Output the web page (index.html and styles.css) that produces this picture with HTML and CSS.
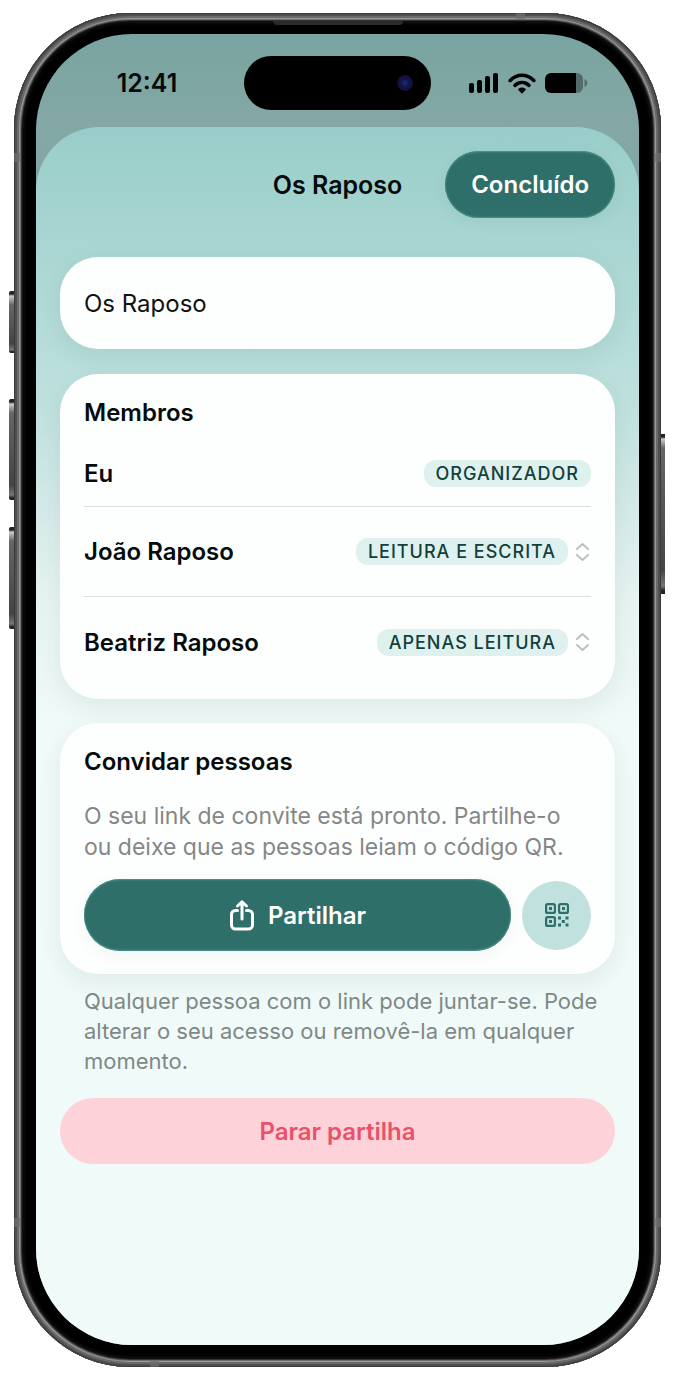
FILE: index.html
```
<!DOCTYPE html>
<html lang="pt">
<head>
    <meta charset="UTF-8">
    <meta name="viewport" content="width=device-width, initial-scale=1.0">
    <title>Os Raposo</title>
    <link rel="stylesheet" href="styles.css">
</head>
<body>

    <div class="phone">
        <!-- Hardware buttons -->
        <span class="side-button action"></span>
        <span class="side-button volume-up"></span>
        <span class="side-button volume-down"></span>
        <span class="side-button power"></span>
        <!-- Antenna bands and speaker slot -->
        <span class="band band-top"></span>
        <span class="band band-bottom"></span>
        <span class="band band-left"></span>
        <span class="band band-right"></span>
        <span class="band band-left low"></span>
        <span class="band band-right low"></span>
        <span class="speaker"></span>

        <div class="screen">
            <div class="status-bar">
                <span class="time">12:41</span>
                <div class="island"><span class="camera"></span></div>
                <div class="status-icons">
                    <svg width="30" height="20" viewBox="0 0 30 20" aria-hidden="true">
                        <rect x="0" y="10" width="5" height="10" rx="2"/>
                        <rect x="8" y="7" width="5" height="13" rx="2"/>
                        <rect x="16" y="3" width="5" height="17" rx="2"/>
                        <rect x="24" y="0" width="5" height="20" rx="2"/>
                    </svg>
                    <svg width="28" height="21" viewBox="0 0 28 21" aria-hidden="true">
                        <g fill="none" stroke="#000" stroke-width="3.6" stroke-linecap="round">
                            <path d="M2.200 7.400C9 .600 19 .600 25.800 7.400"/>
                            <path d="M7 12.300c4.200-3.800 9.800-3.800 14 0"/>
                        </g>
                        <path d="M14 20.800l-3.400-3.500c-.6-.7-.4-1.500.3-1.900 1.900-1.200 4.300-1.200 6.200 0 .7.400.9 1.200.3 1.900z"/>
                    </svg>
                    <svg width="43" height="20" viewBox="0 0 43 20" aria-hidden="true">
                        <path d="M31 0h1a6 6 0 0 1 6 6v8a6 6 0 0 1-6 6h-1z" opacity=".35"/>
                        <path d="M6 0h25v20H6a6 6 0 0 1-6-6V6a6 6 0 0 1 6-6z"/>
                        <path d="M39.500 6c3.800 1.600 3.800 6.400 0 8z" opacity=".35"/>
                    </svg>
                </div>
            </div>

            <main class="sheet">
                <header class="sheet-header">
                    <h1>Os Raposo</h1>
                    <button type="button" class="glass done">Concluído</button>
                </header>

                <input type="text" class="card name-input" value="Os Raposo" aria-label="Nome do grupo">

                <section class="card members">
                    <h2>Membros</h2>
                    <ul>
                        <li>
                            <span>Eu</span>
                            <span class="pill">Organizador</span>
                        </li>
                        <li>
                            <label for="joao">João Raposo</label>
                            <div class="access">
                                <select id="joao" class="pill">
                                    <option selected>Leitura e escrita</option>
                                    <option>Apenas leitura</option>
                                </select>
                                <svg width="16" height="20" viewBox="0 0 16 20" aria-hidden="true">
                                    <path d="M2 7L7.500 2 13 7M2 13l5.500 5 5.500-5"/>
                                </svg>
                            </div>
                        </li>
                        <li>
                            <label for="beatriz">Beatriz Raposo</label>
                            <div class="access">
                                <select id="beatriz" class="pill">
                                    <option>Leitura e escrita</option>
                                    <option selected>Apenas leitura</option>
                                </select>
                                <svg width="16" height="20" viewBox="0 0 16 20" aria-hidden="true">
                                    <path d="M2 7L7.500 2 13 7M2 13l5.500 5 5.500-5"/>
                                </svg>
                            </div>
                        </li>
                    </ul>
                </section>

                <section class="card invite">
                    <h2>Convidar pessoas</h2>
                    <p>O seu link de convite está pronto. Partilhe-o ou deixe que as pessoas leiam o código QR.</p>
                    <div class="invite-actions">
                        <button type="button" class="glass share">
                            <svg width="26" height="32" viewBox="0 0 26 32" aria-hidden="true">
                                <path d="M8.500 11.500H6.500a4 4 0 0 0-4 4V26a4 4 0 0 0 4 4h13a4 4 0 0 0 4-4V15.500a4 4 0 0 0-4-4h-2M13 20V3M8.500 7L13 2.800 17.500 7"/>
                            </svg>
                            Partilhar
                        </button>
                        <button type="button" class="qr" aria-label="Código QR">
                            <svg width="24" height="24" viewBox="0 0 24 24" aria-hidden="true">
                                <g fill="none" stroke="#2f6f6a" stroke-width="2.200">
                                    <rect x="1.100" y="1.100" width="8.800" height="8.800" rx="1.500"/>
                                    <rect x="14.100" y="1.100" width="8.800" height="8.800" rx="1.500"/>
                                    <rect x="1.100" y="14.100" width="8.800" height="8.800" rx="1.500"/>
                                </g>
                                <path fill="#2f6f6a" d="M4 4h3v3H4zM17 4h3v3h-3zM4 17h3v3H4zM13 13.500h3v3h-3zM20.500 13.500h3v3h-3zM16.800 17h3v3h-3zM13 20.500h3v3h-3zM20.500 20.500h3v3h-3z"/>
                            </svg>
                        </button>
                    </div>
                </section>

                <p class="note">Qualquer pessoa com o link pode juntar-se. Pode alterar o seu acesso ou removê-la em qualquer momento.</p>

                <button type="button" class="stop">Parar partilha</button>
            </main>
        </div>
    </div>

</body>
</html>
```
FILE: styles.css
```
* {
    box-sizing: border-box;
}

body {
    margin: 0;
    padding: 13px 14px;
    min-height: 100vh;
    display: flex;
    background-color: white;
    color: #050b0b;
    font-family: Inter, "Liberation Sans", sans-serif;
    font-size: 24px;
}

h1, h2, p, ul {
    margin: 0;
    padding: 0;
}

button, input, select {
    font-family: inherit;
    border: none;
}

button {
    cursor: pointer;
}

.phone {
    position: relative;
    flex: 1;
    display: flex;
    padding: 21px 22px 22px;
    border-radius: 116px;
    background-color: black;
    box-shadow:
        inset 0 0 0 1px #3a3a3a,
        inset 0 0 0 3px #505050,
        inset 0 0 0 5px #6a6a6a,
        inset 0 0 0 6px #999,
        inset 0 0 0 7px #6e6e6e,
        inset 0 0 0 8px #333,
        inset 0 0 4px 9px #1c1c1c;
}

.side-button {
    position: absolute;
    width: 5px;
    background: linear-gradient(#222 0, #222 3px, #ccc 5px, #666 14px, #444 85%, #777 95%, #222 98%);
}

.side-button.action {
    left: -5px;
    top: 278px;
    height: 62px;
    border-radius: 2px 0 0 2px;
}

.side-button.volume-up {
    left: -5px;
    top: 386px;
    height: 101px;
    border-radius: 2px 0 0 2px;
}

.side-button.volume-down {
    left: -5px;
    top: 514px;
    height: 102px;
    border-radius: 2px 0 0 2px;
}

.side-button.power {
    right: -4px;
    top: 421px;
    height: 160px;
    width: 4px;
}

.band {
    position: absolute;
    width: 7px;
    height: 9px;
    background-color: rgba(110, 110, 110, 0.7);
}

.band-top {
    top: 0;
    right: 136px;
    width: 9px;
    height: 7px;
}

.band-bottom {
    bottom: 0;
    left: 136px;
    width: 9px;
    height: 7px;
}

.band-left {
    left: 0;
    top: 140px;
}

.band-right {
    right: 0;
    top: 140px;
}

.band.low {
    top: auto;
    bottom: 140px;
}

.speaker {
    position: absolute;
    top: 8px;
    left: calc(50% - 65px);
    width: 130px;
    height: 4px;
    border-radius: 0 0 4px 4px;
    background-color: #2b2b2b;
}

.screen {
    flex: 1;
    display: flex;
    flex-direction: column;
    overflow: hidden;
    border-radius: 96px;
    background: linear-gradient(#79a4a1 0, #84a8a5 93px, #7fa5a2 160px);
}

/* Status bar */
.status-bar {
    display: grid;
    grid-template-columns: 1fr 187px 1fr;
    align-items: center;
    justify-items: center;
    height: 93px;
    padding: 5px 14px 0;
}

.time {
    font-size: 25px;
    font-weight: 600;
}

.island {
    display: flex;
    align-items: center;
    justify-content: flex-end;
    width: 100%;
    height: 54px;
    padding-right: 18px;
    border-radius: 27px;
    background-color: black;
}

.camera {
    width: 16px;
    height: 16px;
    border-radius: 50%;
    background: radial-gradient(circle, #1c2c7c 0, #10164c 35%, #190f40 60%, #05050c 80%);
}

.status-icons {
    display: flex;
    align-items: center;
    gap: 9px;
}

/* Sheet */
.sheet {
    flex: 1;
    display: flex;
    flex-direction: column;
    padding: 24px;
    border-radius: 64px 64px 0 0;
    background: linear-gradient(#99cdc9 0, #a9d6d2 120px, #bfe1de 280px, #d2e9e7 370px, #e6f3f1 470px, #f0faf8 600px);
}

.sheet-header {
    display: grid;
    grid-template-columns: 1fr auto 1fr;
    align-items: center;
    margin-bottom: 39px;
}

.sheet-header h1 {
    grid-column: 2;
    font-size: 25px;
    font-weight: 600;
}

.glass {
    color: white;
    font-size: 24px;
    font-weight: 600;
    background-color: #2f6f6a;
    box-shadow: inset 0 1px 2px #4f9688, inset 0 -1px 2px #4f9688, 0 4px 16px rgba(0, 60, 60, 0.06);
}

.done {
    justify-self: end;
    height: 67px;
    padding: 0 26px;
    border-radius: 34px;
}

.card {
    margin-bottom: 25px;
    padding: 24px 24px 12px;
    border-radius: 38px;
    background-color: #fdfffe;
    box-shadow: 0 8px 24px rgba(0, 60, 55, 0.08);
}

.name-input {
    width: 100%;
    height: 92px;
    padding: 0 24px;
    color: #111;
    font-size: 24px;
}

.card h2 {
    font-size: 24px;
    font-weight: 600;
    line-height: 30px;
}

/* Members */
.members {
    margin-bottom: 24px;
}

.members ul {
    margin-top: 12px;
    list-style: none;
}

.members li {
    display: flex;
    align-items: center;
    justify-content: space-between;
    height: 90px;
    font-weight: 600;
    border-bottom: 1px solid #dcdedd;
}

.members li:first-child {
    height: 67px;
}

.members li:last-child {
    border-bottom: none;
}

.pill {
    height: 27px;
    padding: 0 12px;
    border-radius: 12px;
    background-color: #dff1ef;
    color: #12403c;
    font-size: 18px;
    font-weight: 500;
    line-height: 27px;
    letter-spacing: 1px;
    text-transform: uppercase;
}

select.pill {
    appearance: none;
    field-sizing: content;
}

.access {
    display: flex;
    align-items: center;
    gap: 7px;
}

.access svg {
    fill: none;
    stroke: #bcbfbe;
    stroke-width: 2;
    stroke-linecap: round;
    stroke-linejoin: round;
}

/* Invite */
.invite {
    margin-bottom: 12px;
    padding-bottom: 23px;
}

.invite p {
    margin: 24px 0 16px;
    color: #858787;
    font-size: 23px;
    line-height: 31px;
}

.invite-actions {
    display: flex;
    align-items: center;
    gap: 11px;
}

.share {
    flex: 1;
    display: flex;
    align-items: center;
    justify-content: center;
    gap: 13px;
    height: 72px;
    border-radius: 36px;
}

.share svg {
    fill: none;
    stroke: white;
    stroke-width: 3;
    stroke-linecap: round;
    stroke-linejoin: round;
}

.qr {
    display: flex;
    align-items: center;
    justify-content: center;
    width: 69px;
    height: 69px;
    padding: 0;
    border-radius: 50%;
    background-color: #c1e1df;
}

.note {
    margin-bottom: 22px;
    padding: 0 12px 0 24px;
    color: #7f8887;
    font-size: 22px;
    line-height: 30px;
}

.stop {
    height: 66px;
    border-radius: 33px;
    background-color: #fdd3d9;
    color: #ea5169;
    font-size: 24px;
    font-weight: 600;
}
```
